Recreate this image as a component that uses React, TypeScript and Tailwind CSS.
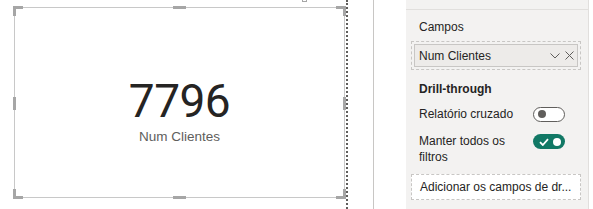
import React from 'react';

function Handle({ className }: { className: string }) {
  return <div className={`absolute bg-[#a6a6a6] ${className}`} />;
}

function Toggle({ on }: { on: boolean }) {
  if (on) {
    return (
      <div className="flex h-[15px] w-[32px] shrink-0 items-center justify-between rounded-full bg-[#117865] pl-[6px] pr-[4px]">
        <svg width="10" height="8" viewBox="0 0 10 8" aria-hidden="true">
          <path d="M1 4.2 L3.8 7 L9 1.2" fill="none" stroke="#ffffff" strokeWidth="1.8" />
        </svg>
        <div className="h-[8px] w-[8px] rounded-full bg-white" />
      </div>
    );
  }
  return (
    <div className="flex h-[15px] w-[32px] shrink-0 items-center rounded-full border border-[#605e5c] bg-white pl-[4px]">
      <div className="h-[8px] w-[8px] rounded-full bg-[#605e5c]" />
    </div>
  );
}

export default function App() {
  return (
    <div className="flex h-[209px] w-[593px] overflow-hidden bg-white font-['Liberation_Sans',Arial,sans-serif] text-[#252423]">
      {/* visual */}
      <div className="relative pl-[14px] pt-[7px]">
        <div className="absolute left-[302px] top-[-3px] h-[5px] w-[5px] border border-[#a6a6a6]" />
        <div className="relative flex h-[191px] w-[331px] flex-col items-center border border-[#c8c8c8] pt-[70px]">
          <div className="font-['Roboto',sans-serif] text-[46px] font-normal leading-[46px] tracking-[-0.5px] text-[#252423]">
            7796
          </div>
          <div className="mt-[5px] text-[13.5px] leading-[16px] text-[#605e5c]">Num Clientes</div>

          {/* corner handles */}
          <Handle className="left-[-2px] top-[-2px] h-[3px] w-[10px]" />
          <Handle className="left-[-2px] top-[-2px] h-[10px] w-[3px]" />
          <Handle className="right-[-2px] top-[-2px] h-[3px] w-[10px]" />
          <Handle className="right-[-2px] top-[-2px] h-[10px] w-[3px]" />
          <Handle className="bottom-[-2px] left-[-2px] h-[3px] w-[10px]" />
          <Handle className="bottom-[-2px] left-[-2px] h-[10px] w-[3px]" />
          <Handle className="bottom-[-2px] right-[-2px] h-[3px] w-[10px]" />
          <Handle className="bottom-[-2px] right-[-2px] h-[10px] w-[3px]" />
          {/* middle handles */}
          <Handle className="left-[158px] top-[-2px] h-[3px] w-[13px]" />
          <Handle className="bottom-[-2px] left-[158px] h-[3px] w-[13px]" />
          <Handle className="left-[-2px] top-[89px] h-[13px] w-[3px]" />
          <Handle className="right-[-2px] top-[89px] h-[13px] w-[3px]" />
        </div>
      </div>

      <div className="ml-[1px] h-full border-l-2 border-dotted border-[#605e5c]" />
      <div className="ml-[25px] h-full w-px bg-[#c8c6c4]" />

      {/* pane */}
      <div className="ml-[32px] flex h-full w-[183px] flex-col border-r border-[#e1dfdd] bg-[#f3f2f1] text-[12px] leading-[16px]">
        <div className="h-[10px] border-b border-[#e1dfdd]" />
        <div className="mt-[9px] pl-[13px]">Campos</div>

        <div className="ml-[5px] mt-[6px] flex h-[29px] w-[170px] border border-dashed border-[#c8c6c4] p-[2px]">
          <div className="flex flex-1 items-center border border-[#c8c6c4] bg-[#edebe9] pl-[4px] pr-[3px]">
            <span className="flex-1">Num Clientes</span>
            <svg width="10" height="6" viewBox="0 0 10 6" className="mr-[5px]" aria-hidden="true">
              <path d="M0.5 0.5 L5 5 L9.5 0.5" fill="none" stroke="#605e5c" strokeWidth="1" />
            </svg>
            <svg width="9" height="9" viewBox="0 0 9 9" aria-hidden="true">
              <path d="M0.5 0.5 L8.5 8.5 M8.5 0.5 L0.5 8.5" fill="none" stroke="#605e5c" strokeWidth="1" />
            </svg>
          </div>
        </div>

        <div className="mt-[11px] pl-[13px] font-bold">Drill-through</div>

        <div className="mt-[9px] flex items-center pl-[13px]">
          <span className="w-[114px]">Relatório cruzado</span>
          <Toggle on={false} />
        </div>

        <div className="mt-[11px] flex items-start pl-[13px]">
          <span className="w-[114px] pr-[10px]">Manter todos os filtros</span>
          <div className="pt-[1px]">
            <Toggle on={true} />
          </div>
        </div>

        <div className="ml-[5px] mt-[9px] flex h-[26px] w-[170px] items-center border border-dashed border-[#c8c6c4] bg-white pl-[8px]">
          Adicionar os campos de dr...
        </div>
      </div>
    </div>
  );
}
